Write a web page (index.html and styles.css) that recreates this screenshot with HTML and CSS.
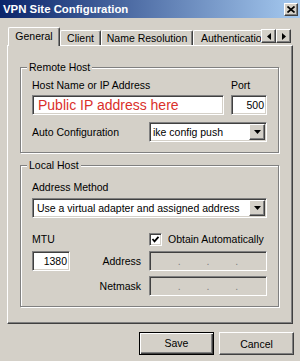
FILE: index.html
```html
<!DOCTYPE html>
<html lang="en">

<head>
    <meta charset="UTF-8">
    <meta name="viewport" content="width=device-width, initial-scale=1.0">
    <title>VPN Site Configuration</title>
    <link rel="stylesheet" href="styles.css">
</head>

<body>
    <div class="window">
        <div class="titlebar">
            <span class="title">VPN Site Configuration</span>
            <span class="close raised">
                <svg width="8" height="7" viewBox="0 0 8 7">
                    <path d="M0.5 0.5 L7.5 6.5 M7.5 0.5 L0.5 6.5" stroke="#000" stroke-width="1.7" />
                </svg>
            </span>
        </div>

        <div class="tabs">
            <div class="strip">
                <span class="tab on t-gen">General</span>
                <span class="tab t-cli">Client</span>
                <span class="tab t-name">Name Resolution</span>
                <span class="tab t-auth">Authentication</span>
            </div>
            <div class="scroll">
                <span class="arrow raised">
                    <svg width="4" height="7" viewBox="0 0 4 7"><polygon points="4,0 4,7 0,3.5" fill="#000" /></svg>
                </span>
                <span class="arrow raised">
                    <svg width="4" height="7" viewBox="0 0 4 7"><polygon points="0,0 0,7 4,3.5" fill="#000" /></svg>
                </span>
            </div>
        </div>

        <div class="panel">
            <div class="grp remote">
                <span class="gt">Remote Host</span>
                <div class="rg">
                    <label>Host Name or IP Address</label>
                    <label>Port</label>
                    <div class="fld host">Public IP address here</div>
                    <div class="fld num">500</div>
                </div>
                <div class="auto">
                    <label>Auto Configuration</label>
                    <div class="fld sel small">
                        <span class="val">ike config push</span>
                        <span class="drop raised">
                            <svg width="7" height="4" viewBox="0 0 7 4"><polygon points="0,0 7,0 3.5,4" fill="#000" /></svg>
                        </span>
                    </div>
                </div>
            </div>

            <div class="grp local">
                <span class="gt">Local Host</span>
                <label class="am">Address Method</label>
                <div class="fld sel">
                    <span class="val">Use a virtual adapter and assigned address</span>
                    <span class="drop raised">
                        <svg width="7" height="4" viewBox="0 0 7 4"><polygon points="0,0 7,0 3.5,4" fill="#000" /></svg>
                    </span>
                </div>
                <div class="lg">
                    <label>MTU</label>
                    <span></span>
                    <span class="chk">
                        <span class="box">
                            <svg width="9" height="9" viewBox="0 0 9 9">
                                <polyline points="1.5,4 3.5,6.3 7.5,1.8" fill="none" stroke="#000" stroke-width="1.8" />
                            </svg>
                        </span>
                        Obtain Automatically
                    </span>

                    <div class="fld num">1380</div>
                    <label class="rt">Address</label>
                    <div class="fld ip"><i></i>.<i></i>.<i></i>.<i></i></div>

                    <span></span>
                    <label class="rt">Netmask</label>
                    <div class="fld ip"><i></i>.<i></i>.<i></i>.<i></i></div>
                </div>
            </div>
        </div>

        <div class="actions">
            <span class="btn def">Save</span>
            <span class="btn raised">Cancel</span>
        </div>
    </div>
</body>

</html>
```

FILE: styles.css
```css
html,
body {
    margin: 0;
    background-color: #d4d0c8;
}

* {
    box-sizing: border-box;
}

.window {
    width: 300px;
    height: 361px;
    overflow: hidden;
    background-color: #d4d0c8;
    font-family: "Liberation Sans", Arial, sans-serif;
    font-size: 10.5px;
    color: #000;
}

/* raised 3d edge used by small buttons */
.raised {
    display: flex;
    align-items: center;
    justify-content: center;
    background-color: #d4d0c8;
    border: 1px solid;
    border-color: #fff #404040 #404040 #fff;
    box-shadow: inset -1px -1px #808080;
}

.titlebar {
    display: flex;
    justify-content: space-between;
    height: 18px;
    padding-left: 3px;
    background: linear-gradient(to right, #0a246a, #a6caf0);
}

.title {
    color: #fff;
    font-weight: bold;
    font-size: 11.4px;
    line-height: 18px;
}

.close {
    width: 14px;
    height: 13px;
    margin: 3px 2px 0 0;
}

.tabs {
    display: flex;
    height: 28px;
    padding-left: 8px;
}

.strip {
    display: flex;
    align-items: flex-end;
    width: 253px;
    overflow: hidden;
}

.tab {
    flex-shrink: 0;
    height: 15px;
    margin-bottom: 1px;
    line-height: 14px;
    text-align: center;
    border: 1px solid;
    border-color: #fff #404040 transparent #fff;
    border-bottom: 0;
    border-radius: 2px 2px 0 0;
    box-shadow: inset -1px 0 #808080;
}

.tab.on {
    position: relative;
    z-index: 1;
    height: 19px;
    margin-bottom: 0;
    line-height: 16px;
    background-color: #d4d0c8;
}

.t-gen {
    width: 52px;
}

.t-cli {
    width: 41px;
}

.t-name {
    width: 92px;
}

.t-auth {
    padding: 0 7px;
    text-align: left;
}

.scroll {
    display: flex;
    align-self: flex-start;
    margin-top: 11px;
}

.arrow {
    width: 15px;
    height: 14px;
}

.panel {
    width: 286px;
    height: 279px;
    margin: -1px 0 0 7px;
    padding: 21px 13px 0 12px;
    border: 1px solid;
    border-color: #fff #404040 #404040 #fff;
    box-shadow: inset -1px -1px #808080;
}

/* etched group box */
.grp {
    display: flex;
    flex-direction: column;
    border: 1px solid #808080;
    box-shadow: 1px 1px #fff, inset 1px 1px #fff;
    padding: 0 11px 10px;
}

.gt {
    align-self: flex-start;
    margin: -8px 0 0 -5px;
    padding: 0 2px;
    line-height: 14px;
    background-color: #d4d0c8;
}

label {
    line-height: 14px;
}

.local {
    margin-top: 12px;
}

/* sunken field */
.fld {
    height: 20px;
    padding: 1px;
    line-height: 16px;
    background-color: #fff;
    border: 1px solid;
    border-color: #808080 #fff #fff #808080;
    box-shadow: inset 1px 1px #404040, inset -1px -1px #d4d0c8;
    white-space: nowrap;
    overflow: hidden;
}

.rg {
    display: grid;
    grid-template-columns: 1fr 36px;
    grid-template-rows: 14px 20px;
    column-gap: 7px;
    row-gap: 3px;
    margin-top: 4px;
}

.host {
    padding-left: 5px;
    color: #da2f2b;
    font-size: 14px;
}

.num {
    padding-right: 2px;
    text-align: right;
}

.auto {
    display: flex;
    align-items: center;
    justify-content: space-between;
    margin-top: 7px;
}

.sel {
    display: flex;
}

.sel .val {
    flex: 1;
    padding-left: 3px;
}

.small {
    width: 118px;
}

.small .val {
    padding-left: 2px;
}

.drop {
    width: 16px;
    height: 16px;
}

.am {
    margin: 8px 0 4px;
}

.lg {
    display: grid;
    grid-template-columns: 38px 1fr 118px;
    grid-template-rows: 14px 20px 20px;
    column-gap: 8px;
    row-gap: 5px;
    margin-top: 14px;
    align-items: center;
}

.rt {
    text-align: right;
}

.chk {
    display: flex;
    align-items: center;
    gap: 6px;
    white-space: nowrap;
}

.box {
    display: flex;
    align-items: center;
    justify-content: center;
    width: 13px;
    height: 13px;
    background-color: #fff;
    border: 1px solid;
    border-color: #808080 #fff #fff #808080;
    box-shadow: inset 1px 1px #404040, inset -1px -1px #d4d0c8;
}

.ip {
    display: flex;
    align-items: flex-end;
    background-color: #d4d0c8;
    color: #808080;
    padding: 1px 2px;
    line-height: 15px;
}

.ip i {
    flex: 1;
}

.actions {
    display: flex;
    justify-content: flex-end;
    gap: 5px;
    padding: 8px 6px 0 0;
}

.btn {
    width: 75px;
    height: 23px;
    line-height: 20px;
    text-align: center;
}

.btn.def {
    border: 1px solid #000;
    box-shadow: inset 1px 1px #fff, inset -1px -1px #404040, inset -2px -2px #808080;
}
```
